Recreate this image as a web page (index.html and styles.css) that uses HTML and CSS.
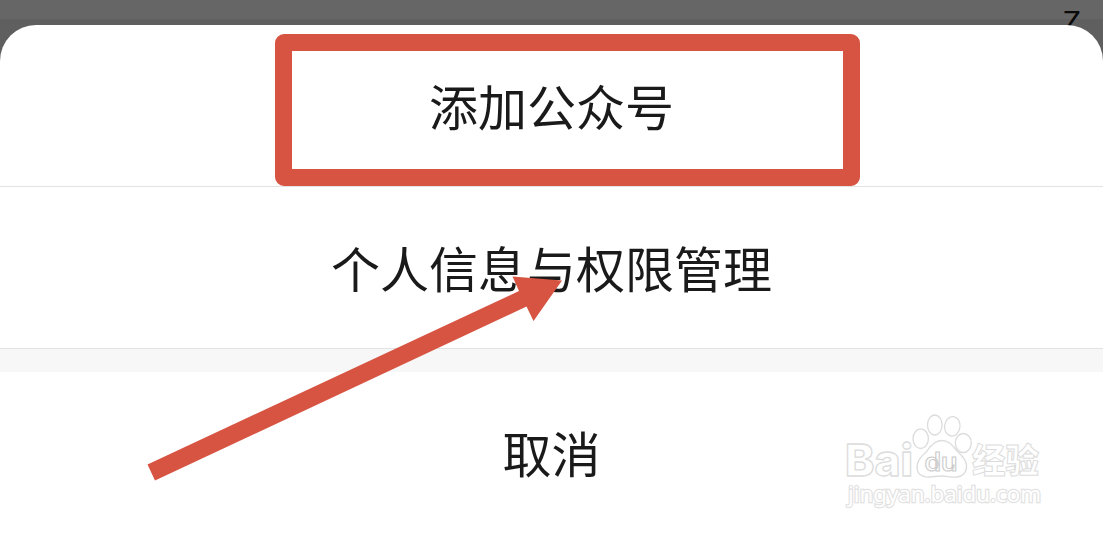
FILE: index.html
```
<!DOCTYPE html>
<html lang="zh-CN">
<head>
    <meta charset="UTF-8">
    <meta name="viewport" content="width=device-width, initial-scale=1.0">
    <title>添加公众号</title>
    <link rel="stylesheet" href="styles.css">
</head>
<body>
    <div class="page">
        <div class="page-letter">Z</div>
        <div class="sheet">
            <div class="sheet-item">添加公众号</div>
            <div class="sheet-item">个人信息与权限管理</div>
            <div class="sheet-gap"></div>
            <div class="sheet-item cancel">取消</div>
        </div>

        <!-- 标注框和箭头 -->
        <div class="mark-box"></div>
        <svg class="mark-arrow" viewBox="0 0 1103 533">
            <path d="M147.5 464.5 L519 291 L512.5 276.5 L562 280.5 L533.5 321 L526.5 306.5 L155 480.5 Z"/>
        </svg>

        <!-- 水印 -->
        <svg class="watermark" viewBox="830 400 230 120">
            <text class="logo" x="845" y="476" textLength="68" lengthAdjust="spacingAndGlyphs">Bai</text>
            <g class="paw">
                <ellipse cx="920.7" cy="438.7" rx="7.7" ry="9.8"/>
                <ellipse cx="934.8" cy="425" rx="7.3" ry="10"/>
                <ellipse cx="952.3" cy="426.3" rx="7.7" ry="9.8" transform="rotate(8 952.3 426.3)"/>
                <ellipse cx="963.3" cy="443" rx="8" ry="9.5"/>
                <path d="M941.5 440.5 C935 440.5 931 445 927 451 C922 456 917 460 917 467 C917 474 922 477.5 929 477 C934 476.5 938 476 942 476 C947 476 951 477.5 957 477 C963 476.5 967 472 966.5 465 C966 459 961 455 957 451 C952 445 949 440.5 941.5 440.5 Z"/>
            </g>
            <text class="du" x="924.5" y="471" textLength="33" lengthAdjust="spacingAndGlyphs">du</text>
            <text class="jingyan" x="972" y="472.5" textLength="67" lengthAdjust="spacingAndGlyphs">经验</text>
            <text class="url" x="848" y="501.5" textLength="193" lengthAdjust="spacingAndGlyphs">jingyan.baidu.com</text>
        </svg>
    </div>
</body>
</html>
```
FILE: styles.css
```
* {
    margin: 0;
    padding: 0;
    box-sizing: border-box;
}

body {
    font-family: "Noto Sans CJK SC", sans-serif;
    color: #1a1a1a;
    overflow: hidden;
}

.page {
    position: relative;
    height: 533px;
    padding-top: 25px;
    background: linear-gradient(#666 19px, #5f5f5f 19px);
    overflow: hidden;
}

.page-letter {
    position: absolute;
    top: 6px;
    right: 22px;
    font-family: Roboto, sans-serif;
    font-size: 30px;
    line-height: 32px;
    color: #0a0a0a;
}

.sheet {
    position: relative;
    height: 508px;
    background: #fff;
    border-radius: 36px 36px 0 0;
    overflow: hidden;
}

.sheet-item {
    display: flex;
    align-items: center;
    justify-content: center;
    height: 162px;
    padding-bottom: 2px;
    border-bottom: 1px solid #e3e3e3;
    font-size: 49px;
    line-height: 72px;
}

.sheet-item.cancel {
    height: 161px;
    border-bottom: none;
}

.sheet-gap {
    height: 23px;
    background: #f7f7f7;
}

.mark-box {
    position: absolute;
    left: 275px;
    top: 34px;
    width: 585px;
    height: 152px;
    border: 17px solid #d75442;
    border-radius: 9px;
}

.mark-arrow {
    position: absolute;
    left: 0;
    top: 0;
    width: 1103px;
    height: 533px;
    fill: #d75442;
}

.watermark {
    position: absolute;
    left: 830px;
    top: 400px;
    width: 230px;
    height: 120px;
    fill: #fff;
    stroke: #dcdcdc;
    stroke-width: 1.3;
    opacity: 0.99;
}

.logo {
    font-family: Inter, sans-serif;
    font-size: 44px;
    font-weight: 800;
}

.du {
    font-family: Roboto, sans-serif;
    font-size: 26px;
    font-weight: 500;
    stroke: #ccc;
    stroke-width: 1;
}

.jingyan {
    font-family: "Noto Sans CJK SC", sans-serif;
    font-size: 34px;
    font-weight: 900;
    stroke-width: 1;
}

.url {
    font-family: "Noto Sans", sans-serif;
    font-size: 22px;
    font-weight: 400;
    paint-order: stroke;
    stroke-width: 2.4;
    stroke: #e2e2e2;
}
```
